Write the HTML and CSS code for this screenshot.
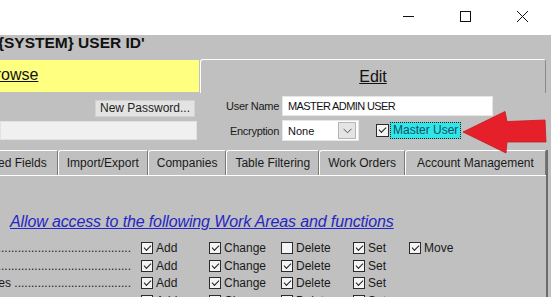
FILE: index.html
```html
<!DOCTYPE html>
<html lang="en">
<head>
    <meta charset="UTF-8">
    <title>User Security</title>
    <link rel="stylesheet" href="styles.css">
</head>
<body>
    <div class="titlebar">
        <div class="win-btn">
            <svg width="11" height="11" viewBox="0 0 11 11"><path d="M0 5.5h11" stroke="#111" fill="none"/></svg>
        </div>
        <div class="win-btn">
            <svg width="11" height="11" viewBox="0 0 11 11"><rect x="0.5" y="0.5" width="10" height="10" stroke="#111" fill="none"/></svg>
        </div>
        <div class="win-btn">
            <svg width="11" height="11" viewBox="0 0 11 11"><path d="M0 0L11 11M11 0L0 11" stroke="#111" fill="none"/></svg>
        </div>
    </div>

    <div class="caption">{SYSTEM} USER ID'</div>

    <div class="top">
        <div class="left-col">
            <div class="browse-tab"><span class="tab-link">Browse</span></div>
            <div class="pw-row"><button class="btn">New Password...</button></div>
            <div class="pw-field"></div>
        </div>
        <div class="edit-col">
            <div class="edit-tab"><span class="tab-link">Edit</span></div>
            <div class="form">
                <div class="frow">
                    <label class="flabel">User Name</label>
                    <div class="field">MASTER ADMIN USER</div>
                </div>
                <div class="frow frow-2">
                    <label class="flabel">Encryption</label>
                    <div class="select">
                        <span>None</span>
                        <span class="drop">
                            <svg width="9" height="6" viewBox="0 0 9 6"><path d="M0.5 0.8L4.5 4.8L8.5 0.8" stroke="#555" fill="none"/></svg>
                        </span>
                    </div>
                    <span class="cb on master-cb"></span>
                    <span class="focus">Master User</span>
                </div>
            </div>
        </div>
    </div>

    <div class="book">
        <div class="tabs">
            <div class="tab tab-first">ed Fields</div>
            <div class="tab">Import/Export</div>
            <div class="tab">Companies</div>
            <div class="tab">Table Filtering</div>
            <div class="tab">Work Orders</div>
            <div class="tab tab-last">Account Management</div>
        </div>
        <div class="panel">
            <div class="heading">Allow access to the following Work Areas and functions</div>

            <div class="row">
                <div class="row-label"><span>Users .............................................</span></div>
                <div class="cell"><span class="cb on"></span>Add</div>
                <div class="cell"><span class="cb on"></span>Change</div>
                <div class="cell"><span class="cb"></span>Delete</div>
                <div class="cell"><span class="cb on"></span>Set</div>
                <div class="cell"><span class="cb on"></span>Move</div>
            </div>
            <div class="row">
                <div class="row-label"><span>Groups .............................................</span></div>
                <div class="cell"><span class="cb on"></span>Add</div>
                <div class="cell"><span class="cb on"></span>Change</div>
                <div class="cell"><span class="cb on"></span>Delete</div>
                <div class="cell"><span class="cb on"></span>Set</div>
            </div>
            <div class="row">
                <div class="row-label"><span>Companies ...................................</span></div>
                <div class="cell"><span class="cb on"></span>Add</div>
                <div class="cell"><span class="cb on"></span>Change</div>
                <div class="cell"><span class="cb on"></span>Delete</div>
                <div class="cell"><span class="cb on"></span>Set</div>
            </div>
            <div class="row">
                <div class="row-label"><span>Contacts .............................................</span></div>
                <div class="cell"><span class="cb on"></span>Add</div>
                <div class="cell"><span class="cb on"></span>Change</div>
                <div class="cell"><span class="cb on"></span>Delete</div>
                <div class="cell"><span class="cb on"></span>Set</div>
            </div>
        </div>
    </div>

    <!-- red pointer drawn over the form -->
    <svg class="arrow" width="96" height="55" viewBox="0 0 96 55">
        <polygon points="8,27 50,6.5 52,16.5 90,15 91,37 52,37 51,48" fill="#e6202a" stroke="#c81820" stroke-width="0.8" stroke-linejoin="round"/>
    </svg>
</body>
</html>
```

FILE: styles.css
```css
* {
    box-sizing: border-box;
}
body {
    margin: 0;
    width: 551px;
    height: 297px;
    overflow: hidden;
    position: relative;
    background-color: #c0c0c0;
    font-family: 'Liberation Sans', Arial, sans-serif;
    color: #151515;
}
.titlebar {
    height: 35px;
    background: #ffffff;
    display: flex;
    justify-content: flex-end;
}
.win-btn {
    width: 57px;
    display: flex;
    align-items: center;
    justify-content: center;
    padding-bottom: 2px;
}
.win-btn svg {
    display: block;
}
.caption {
    font-weight: bold;
    font-size: 15.5px;
    line-height: 16px;
    margin-left: -2px;
    white-space: nowrap;
    color: #111;
}
.top {
    display: flex;
    width: 546px;
    margin-top: 8px;
}
.left-col {
    width: 200px;
}
.browse-tab {
    margin-top: 1px;
    width: 199px;
    height: 32px;
    background-color: #ffff80;
    font-size: 16px;
    line-height: 20px;
    padding-top: 5px;
    text-indent: -15px;
    white-space: nowrap;
    overflow: hidden;
}
.tab-link {
    text-decoration: underline;
    color: #111;
}
.pw-row {
    display: flex;
    justify-content: flex-end;
    padding-right: 5px;
    margin-top: 8px;
}
.btn {
    font-family: 'Liberation Sans', Arial, sans-serif;
    font-size: 12px;
    height: 17px;
    padding: 0 4px;
    line-height: 15px;
    background-color: #e3e3e3;
    border: 1px solid #d2d2d2;
    color: #222;
}
.pw-field {
    margin-top: 4px;
    width: 197px;
    height: 19px;
    background-color: #f0f0f0;
    border: 1px solid #e2e2e2;
}
.edit-col {
    flex: 1;
}
.edit-tab {
    height: 34px;
    border-top: 1px solid #ffffff;
    border-left: 1px solid #ffffff;
    border-right: 1px solid #8a8a8a;
    border-top-left-radius: 3px;
    border-top-right-radius: 3px;
    text-align: center;
    font-size: 16px;
    line-height: 20px;
    padding-top: 7px;
}
.form {
    padding-top: 3px;
}
.frow {
    display: flex;
    align-items: center;
    height: 20px;
}
.frow-2 {
    margin-top: 4px;
    height: 21px;
}
.flabel {
    width: 79px;
    margin-right: 3px;
    text-align: right;
    font-size: 11px;
    letter-spacing: -0.3px;
    color: #1a1a1a;
}
.field {
    width: 211px;
    height: 20px;
    background: #ffffff;
    border: 1px solid #e6e6e6;
    padding-left: 5px;
    font-size: 11px;
    line-height: 18px;
    letter-spacing: -0.6px;
    color: #111;
}
.select {
    width: 77px;
    height: 21px;
    background: #ffffff;
    border: 1px solid #e6e6e6;
    padding: 0 2px 0 5px;
    display: flex;
    align-items: center;
    justify-content: space-between;
    font-size: 11px;
    color: #111;
}
.drop {
    width: 18px;
    height: 17px;
    background-color: #e4e4e4;
    border: 1px solid #b4b4b4;
    display: flex;
    align-items: center;
    justify-content: center;
}
.cb {
    position: relative;
    flex: none;
    display: inline-block;
    width: 12px;
    height: 12px;
    border: 1px solid #2b2b2b;
    background-color: #f4f4f4;
}
.cb.on::after {
    content: '';
    position: absolute;
    left: 2px;
    top: 2px;
    width: 6px;
    height: 3px;
    border-left: 1px solid #1e1e1e;
    border-bottom: 1px solid #1e1e1e;
    transform: rotate(-45deg);
}
.master-cb {
    width: 13px;
    height: 13px;
    margin-left: 17px;
}
.focus {
    margin-left: 1px;
    height: 17px;
    padding: 0 2px;
    background-color: #33e6e6;
    border: 1px dotted #1a1a1a;
    font-size: 12px;
    line-height: 15px;
    color: #0d4f6a;
    white-space: nowrap;
}
.book {
    width: 548px;
    margin-top: 9px;
    border-right: 2px solid #6c6c6c;
    height: 147px;
    overflow: hidden;
}
.tabs {
    display: flex;
    height: 26px;
    border-bottom: 1px solid #ffffff;
    white-space: nowrap;
}
.tab {
    height: 25px;
    padding: 0 8px;
    border-top: 1px solid #ffffff;
    border-left: 1px solid #ffffff;
    border-right: 1px solid #7a7a7a;
    border-top-left-radius: 3px;
    border-top-right-radius: 2px;
    font-size: 12px;
    line-height: 24px;
    color: #1a1a1a;
}
.tab-first {
    margin-left: -2px;
    padding-left: 0;
    padding-right: 10px;
    border-left: none;
}
.tab-last {
    flex: 1;
    text-align: center;
}
.panel {
    padding-top: 36px;
}
.heading {
    padding-left: 10px;
    font-size: 16px;
    line-height: 20px;
    letter-spacing: -0.13px;
    font-style: italic;
    text-decoration: underline;
    color: #2626c4;
    margin-bottom: 7.5px;
}
.row {
    display: grid;
    grid-template-columns: 141px 68px 72px 72px 56px 60px;
    height: 17.5px;
    align-items: center;
    font-size: 12px;
}
.row-label {
    width: 131px;
    overflow: hidden;
    white-space: nowrap;
    display: flex;
    justify-content: flex-end;
    color: #1a1a1a;
}
.cell {
    display: flex;
    align-items: center;
    gap: 3px;
    color: #1a1a1a;
}
.arrow {
    position: absolute;
    left: 455px;
    top: 105px;
}
```
